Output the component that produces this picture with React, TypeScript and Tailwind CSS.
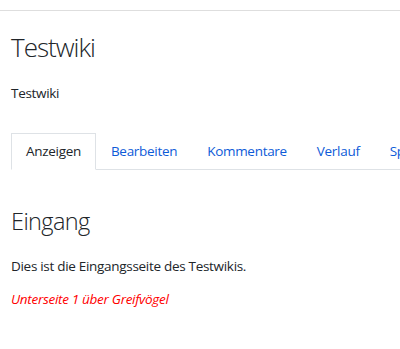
import React from "react";

export default function App() {
  const tabs = ["Bearbeiten", "Kommentare", "Verlauf", "Spezial"];
  return (
    <div className="w-[400px] h-[349px] overflow-hidden bg-white text-[#212529]" style={{ fontFamily: '"Open Sans", "Noto Sans", sans-serif' }}>
      <div className="h-[11px] border-b border-[#dedede]" />
      <div className="pl-[11px]">
        <h1 className="mt-[21px] text-[26px] font-light leading-[1.2] tracking-[-1px]">Testwiki</h1>
        <p className="mt-[20px] text-[13.5px] leading-[1.5] tracking-[-0.3px]">Testwiki</p>
        <div className="mt-[30px] flex border-b border-[#dee2e6] whitespace-nowrap">
          <div className="-mb-px border border-b-white border-[#dee2e6] bg-white px-[14px] py-[6.5px] text-[13.5px] leading-[1.5] tracking-[-0.3px]">Anzeigen</div>
          {tabs.map((t) => (
            <div key={t} className="border border-transparent px-[14px] py-[6.5px] text-[13.5px] leading-[1.5] tracking-[-0.3px] text-[#0d5bd8]">{t}</div>
          ))}
        </div>
        <h2 className="mt-[37px] text-[23.5px] font-light leading-[1.2] tracking-[-0.6px]">Eingang</h2>
        <p className="mt-[21px] text-[13.5px] leading-[1.5] tracking-[-0.3px]">Dies ist die Eingangsseite des Testwikis.</p>
        <p className="mt-[13px] text-[13.5px] italic leading-[1.5] tracking-[-0.3px] text-[#ff0000]">Unterseite 1 über Greifvögel</p>
      </div>
    </div>
  );
}
